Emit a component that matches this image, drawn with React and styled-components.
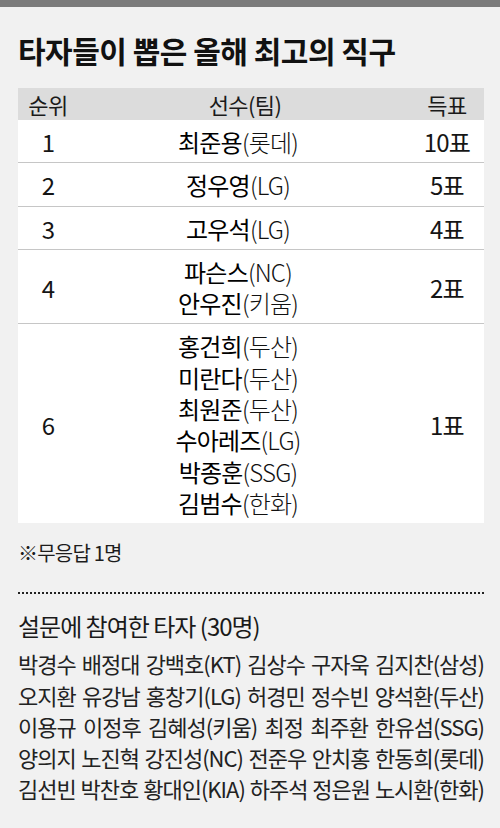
import React from 'react'
import styled, { createGlobalStyle } from 'styled-components'

const ranks = [
  { rank: '1', votes: '10표', players: [['최준용', '롯데']] },
  { rank: '2', votes: '5표', players: [['정우영', 'LG']] },
  { rank: '3', votes: '4표', players: [['고우석', 'LG']] },
  { rank: '4', votes: '2표', players: [['파슨스', 'NC'], ['안우진', '키움']] },
  {
    rank: '6',
    votes: '1표',
    players: [
      ['홍건희', '두산'],
      ['미란다', '두산'],
      ['최원준', '두산'],
      ['수아레즈', 'LG'],
      ['박종훈', 'SSG'],
      ['김범수', '한화'],
    ],
  },
]

const voters = [
  ['박경수', '배정대', '강백호(KT)', '김상수', '구자욱', '김지찬(삼성)'],
  ['오지환', '유강남', '홍창기(LG)', '허경민', '정수빈', '양석환(두산)'],
  ['이용규', '이정후', '김혜성(키움)', '최정', '최주환', '한유섬(SSG)'],
  ['양의지', '노진혁', '강진성(NC)', '전준우', '안치홍', '한동희(롯데)'],
  ['김선빈', '박찬호', '황대인(KIA)', '하주석', '정은원', '노시환(한화)'],
]

function App() {
  return (
    <Page>
      <GlobalStyle />
      <TopBar />
      <Content>
        <Title>타자들이 뽑은 올해 최고의 직구</Title>
        <Table>
          <HeadRow>
            <Cell>순위</Cell>
            <Cell>선수(팀)</Cell>
            <Cell>득표</Cell>
          </HeadRow>
          {ranks.map((r) => (
            <Row key={r.rank}>
              <Cell>{r.rank}</Cell>
              <Names>
                {r.players.map(([name, team]) => (
                  <div key={name}>
                    <Name>{name}</Name>
                    <Team>({team})</Team>
                  </div>
                ))}
              </Names>
              <Cell>{r.votes}</Cell>
            </Row>
          ))}
        </Table>
        <Note>※무응답 1명</Note>
        <Divider />
        <SubTitle>설문에 참여한 타자 (30명)</SubTitle>
        <VoterList>
          {voters.map((line, i) => (
            <VoterLine key={i}>
              {line.map((v) => (
                <span key={v}>{v}</span>
              ))}
            </VoterLine>
          ))}
        </VoterList>
      </Content>
    </Page>
  )
}

const GlobalStyle = createGlobalStyle`
  body {
    margin: 0;
    background: #f1f1f1;
    font-family: "Noto Sans CJK KR", "Noto Sans", sans-serif;
    color: #1c1c1c;
  }
`

const Page = styled.div`
  width: 500px;
  height: 828px;
  background: #f1f1f1;
  overflow: hidden;
`

const TopBar = styled.div`
  height: 7px;
  background: #7b7b7b;
`

const Content = styled.div`
  padding: 0 16px 0 18px;
`

const Title = styled.h1`
  margin: 0;
  padding-top: 21px;
  height: 60px;
  font-size: 30px;
  line-height: 44px;
  font-weight: 700;
  letter-spacing: -0.5px;
  color: #111;
`

const Table = styled.div`
  display: flex;
  flex-direction: column;
`

const HeadRow = styled.div`
  display: grid;
  grid-template-columns: 60px 1fr 72px;
  align-items: center;
  height: 32px;
  background: #dcdcdc;
  font-size: 22px;
  letter-spacing: -0.6px;
  color: #1a1a1a;
`

const Row = styled.div`
  display: grid;
  grid-template-columns: 60px 1fr 72px;
  align-items: center;
  padding: 6px 0 5px;
  background: #fff;
  font-size: 24px;
  line-height: 31.3px;
  letter-spacing: -0.8px;
  color: #151515;
  & + & {
    border-top: 1px solid #c6c6c6;
  }
`

const Cell = styled.div`
  text-align: center;
  &:last-child {
    padding-right: 2px;
  }
`

const Names = styled.div`
  text-align: center;
  padding-right: 14px;
`

const Name = styled.span`
  font-weight: 400;
  color: #000;
`

const Team = styled.span`
  font-weight: 300;
  color: #111;
`

const Note = styled.div`
  padding-top: 17px;
  height: 52px;
  font-size: 20px;
  line-height: 26px;
  letter-spacing: -0.8px;
`

const Divider = styled.div`
  border-top: 2px dotted #222;
`

const SubTitle = styled.div`
  padding-top: 14px;
  font-size: 24px;
  line-height: 36px;
  font-weight: 400;
  letter-spacing: -1px;
  color: #1a1a1a;
`

const VoterList = styled.div`
  padding-top: 4px;
  display: flex;
  flex-direction: column;
`

const VoterLine = styled.div`
  display: flex;
  justify-content: space-between;
  font-size: 22px;
  line-height: 31.3px;
  letter-spacing: -1px;
  color: #222;
`

export default App
